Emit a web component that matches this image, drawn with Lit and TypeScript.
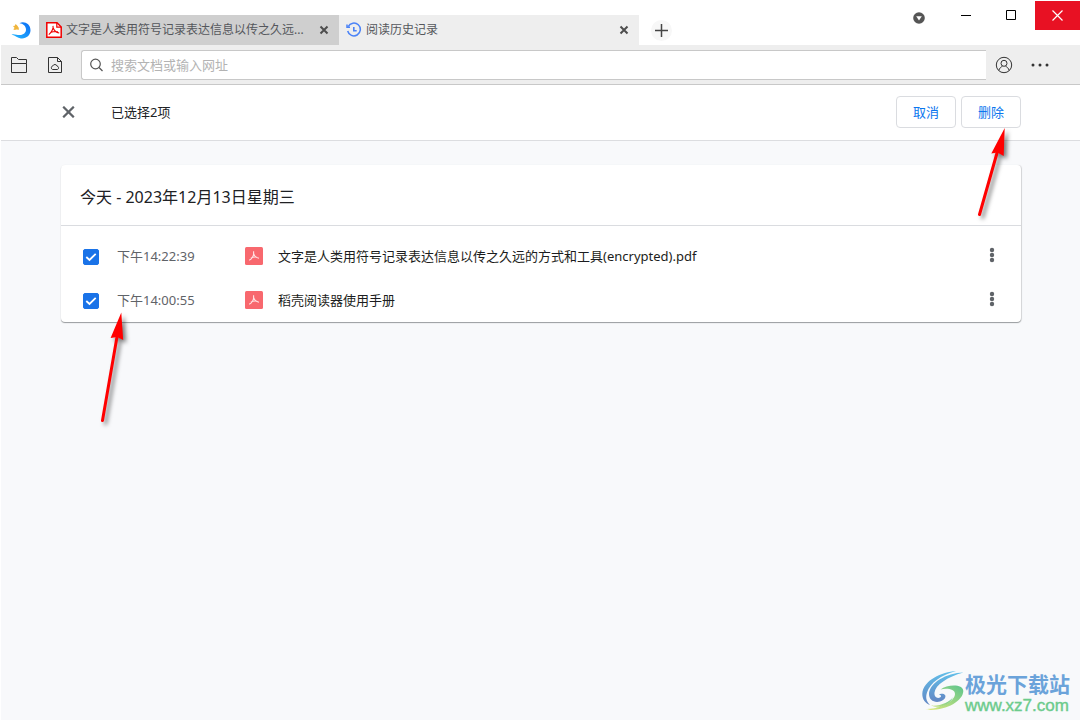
import { LitElement, html, css, svg } from "lit";
import { customElement, property } from "lit/decorators.js";

const font = css`"Noto Sans", "Noto Sans CJK SC", sans-serif`;

const cross = html`<svg width="10" height="10" viewBox="0 0 10 10">
  <path d="M1.5 1.5 8.5 8.5M8.5 1.5 1.5 8.5" fill="none" stroke="currentColor" stroke-width="2" />
</svg>`;

const dot = (cx: number, cy: number, r: number) => svg`<circle cx=${cx} cy=${cy} r=${r} />`;

@customElement("history-row")
export class HistoryRow extends LitElement {
  @property() time = "";
  @property() name = "";

  static styles = css`
    :host {
      display: flex;
      align-items: center;
      height: 44px;
      padding: 0 20px;
      font: 13px/20px ${font};
    }
    .pick {
      display: flex;
      align-items: center;
      width: 164px;
      gap: 18px;
      color: #5f6368;
    }
    .box {
      appearance: none;
      width: 16px;
      height: 16px;
      margin: 2px 0 0 2px;
      border-radius: 2px;
      border: 1px solid #5f6368;
    }
    .box:checked {
      border-color: #1a73e8;
      background: #1a73e8
        url("data:image/svg+xml,%3Csvg xmlns='http://www.w3.org/2000/svg' viewBox='0 0 14 14'%3E%3Cpath d='M2.3 7 5.5 10 11.7 3.8' fill='none' stroke='white' stroke-width='1.8'/%3E%3C/svg%3E")
        center / 14px 14px no-repeat;
    }
    .icon {
      display: block;
      width: 18px;
      height: 18px;
      margin-right: 15px;
      color: #ffe3e4;
    }
    .name {
      flex: 1;
      color: #1c1d20;
      text-decoration: none;
      white-space: nowrap;
      overflow: hidden;
      text-overflow: ellipsis;
    }
    .more {
      display: flex;
      justify-content: center;
      width: 18px;
      height: 24px;
      padding: 3px 0;
      border: 0;
      background: none;
      color: #5f6368;
    }
  `;

  render() {
    return html`
      <label class="pick"><input class="box" type="checkbox" checked /><span>${this.time}</span></label>
      <svg class="icon" viewBox="0 0 18 18">
        <rect width="18" height="18" rx="1.5" fill="#f8686e" />
        <path d="M8.6 4.2V7C8.4 9 6.5 12 4.2 13.2M8.6 6.5C9.3 9 11 10.8 14 11.2M5.8 11.3C8 10 10 9.8 12 10.3"
          fill="none" stroke="currentColor" stroke-width="1.1" />
      </svg>
      <a class="name" href="#">${this.name}</a>
      <button class="more" aria-label="更多">
        <svg width="6" height="16" viewBox="0 0 6 16" fill="currentColor">
          ${[3, 8, 13].map((y) => dot(3, y, 2.2))}
        </svg>
      </button>
    `;
  }
}

@customElement("app-root")
export class AppRoot extends LitElement {
  private entries = [
    { time: "下午14:22:39", name: "文字是人类用符号记录表达信息以传之久远的方式和工具(encrypted).pdf" },
    { time: "下午14:00:55", name: "稻壳阅读器使用手册" },
  ];

  static styles = css`
    :host {
      display: flex;
      flex-direction: column;
      position: relative;
      box-sizing: border-box;
      min-height: 100vh;
      overflow: hidden;
      border: 1px solid #fff;
      background: #f8f9fb;
      font: 13px/20px ${font};
    }
    * {
      box-sizing: border-box;
    }
    svg {
      display: block;
      flex: none;
    }
    button {
      display: flex;
      align-items: center;
      justify-content: center;
      padding: 0;
      border: 0;
      background: none;
      font: inherit;
      color: inherit;
    }
    .titlebar {
      display: flex;
      align-items: flex-end;
      height: 44px;
      background: #fff;
    }
    .logo {
      margin: 0 8px 4px 10px;
    }
    .tab {
      display: flex;
      align-items: center;
      width: 300px;
      height: 30px;
      padding: 0 9px 0 7px;
      background: #eee;
      color: #55575c;
      font-size: 12px;
    }
    .tab.back {
      background: #cfcfcf;
    }
    .tab .label {
      flex: 1;
      margin-left: 4px;
      overflow: hidden;
      white-space: nowrap;
    }
    .close {
      width: 12px;
      height: 16px;
      color: #4d4d4d;
    }
    .add {
      width: 21px;
      height: 21px;
      margin: 0 0 4px 12px;
      border-radius: 50%;
      background: #f7f7f7;
      color: #444;
    }
    .window {
      display: flex;
      align-self: flex-start;
      margin-left: auto;
    }
    .window button {
      width: 45px;
      height: 29px;
      padding: 0 3px 1px 0;
    }
    .window .quit {
      padding: 0 1px 1px 0;
      background: #e81123;
      color: #fff;
    }
    .window .drop {
      width: 50px;
      padding: 5px 3px 0 0;
    }
    .toolbar {
      display: flex;
      align-items: center;
      height: 40px;
      padding: 0 31px 0 9px;
      background: #eee;
      border-bottom: 1px solid #c8c8c8;
      color: #333;
    }
    .toolbar button {
      width: 18px;
      height: 24px;
    }
    .toolbar .cloud {
      margin: 0 17px 0 18px;
    }
    .search {
      display: flex;
      align-items: center;
      flex: 1;
      height: 30px;
      margin-right: 9px;
      padding-left: 8px;
      gap: 7px;
      border: 1px solid #c8c8c8;
      border-right: 0;
      border-radius: 3px 0 0 3px;
      background: #fff;
      color: #555;
    }
    .search input {
      flex: 1;
      min-width: 0;
      height: 24px;
      padding: 0;
      border: 0;
      outline: 0;
      background: none;
      font: inherit;
    }
    .search input::placeholder {
      color: #b3b3b3;
    }
    .toolbar .dots {
      margin-left: 18px;
    }
    .selection {
      display: flex;
      align-items: center;
      height: 56px;
      padding: 0 59px 2px 60px;
      background: #fff;
      border-bottom: 1px solid #dcdde0;
      color: #202124;
    }
    .clear {
      width: 15px;
      height: 20px;
      margin-right: 35px;
      color: #5f6368;
    }
    .actions {
      display: flex;
      gap: 5px;
      margin-left: auto;
    }
    .actions button {
      width: 60px;
      height: 32px;
      border: 1px solid #dadce0;
      border-radius: 4px;
      color: #0b76ee;
    }
    .card {
      margin: 24px 59px 0 60px;
      border-radius: 4px;
      background: #fff;
      box-shadow: 0 1px 1px rgba(60, 64, 67, 0.5), 1px 0 1px rgba(60, 64, 67, 0.15);
    }
    .card h2 {
      height: 61px;
      margin: 0;
      padding: 18px 19px;
      border-bottom: 1px solid #dadce0;
      color: #202124;
      font-size: 16px;
      line-height: 28px;
      font-weight: 400;
    }
    .rows {
      padding: 8px 0 0;
    }
    .arrow {
      position: absolute;
      filter: drop-shadow(3px 3px 2px rgba(0, 0, 0, 0.5));
      pointer-events: none;
    }
    .arrow.to-delete {
      left: 970px;
      top: 124px;
    }
    .arrow.to-row {
      left: 95px;
      top: 309px;
    }
    .mark {
      display: flex;
      align-items: flex-start;
      gap: 1px;
      position: absolute;
      right: 10px;
      bottom: 5px;
      color: #6ba3da;
      text-decoration: none;
    }
    .mark .words {
      display: flex;
      flex-direction: column;
    }
    .mark .title {
      font-size: 21px;
      line-height: 26px;
      font-weight: 700;
    }
    .mark .site {
      color: #6ccb8c;
      font: 17px/18px "Liberation Sans", sans-serif;
      -webkit-text-stroke: 0.4px #6ccb8c;
    }
  `;

  render() {
    return html`
      <header class="titlebar">
        <svg class="logo" width="20" height="20" viewBox="0 0 20 20">
          <defs>
            <linearGradient id="moon" x1="0" y1="1" x2="1" y2="0">
              <stop offset="0" stop-color="#25b9ff" /><stop offset="1" stop-color="#0b6cf5" />
            </linearGradient>
          </defs>
          <path d="M8.500 2.200C13-.3 19.500 2.800 19.500 9.300c0 5.200-4.700 8.800-9.700 8.100C6.500 17 4.500 14.500.5 13.500c3-.7 5 .6 8.300.6 3.800 0 6.200-2.400 6.200-5.500C15 5 12 2.500 8.500 2.200z" fill="url(#moon)" />
          <path d="M2 5 3.800 4.800 4.600 3 6.200 4.600 7.600 6.400 8 8.800 5.500 8.400 3.800 9 2.200 8.200 3.600 7z" fill="#f0b53c" />
        </svg>
        <div class="tab back">
          <svg width="16" height="16" viewBox="0 0 16 16">
            <path d="M.8.8H11L15.200 5v10.200H.8z" fill="#fff" stroke="#f00000" stroke-width="1.500" />
            <path d="M10.800.8V5.200H15.200" fill="none" stroke="#f00000" stroke-width="1.200" />
            <path d="M7 3.800C7.600 6 6 10 2.800 12.600M7 5.500C8 8.500 10 10.500 13.200 11M4.500 10.500C7 9.500 9.500 9.200 12 9.800" fill="none" stroke="#f00000" stroke-width="1.100" />
          </svg>
          <span class="label">文字是人类用符号记录表达信息以传之久远...</span>
          <button class="close" aria-label="关闭标签">${cross}</button>
        </div>
        <div class="tab">
          <svg width="16" height="16" viewBox="0 0 16 16" fill="none" stroke="#4b83f7">
            <path d="M2.200 4.600A6.400 6.400 0 1 1 1.700 9" stroke-width="1.500" />
            <path d="M1 2.500V5.300H4" stroke-width="1.500" />
            <path d="M7.800 5V8.700H10.700" stroke-width="1.600" />
          </svg>
          <span class="label">阅读历史记录</span>
          <button class="close" aria-label="关闭标签">${cross}</button>
        </div>
        <button class="add" aria-label="新标签">
          <svg width="13" height="13" viewBox="0 0 13 13"><path d="M6.500 0V13M0 6.500H13" stroke="currentColor" stroke-width="1.500" /></svg>
        </button>
        <div class="window">
          <button class="drop" aria-label="菜单">
            <svg width="12" height="12" viewBox="0 0 12 12">
              <circle cx="6" cy="6" r="5.800" fill="#555" /><path d="M3.200 4.200H8.800L6 8.400z" fill="#fff" />
            </svg>
          </button>
          <button aria-label="最小化"><svg width="10" height="10"><path d="M0 5.500H10" stroke="#000" /></svg></button>
          <button aria-label="最大化"><svg width="10" height="10"><path d="M.5.5H9.500V9.500H.5z" fill="none" stroke="#000" /></svg></button>
          <button class="quit" aria-label="关闭">
            <svg width="11" height="11" viewBox="0 0 11 11"><path d="M.5.5 10.500 10.500M10.500.5.5 10.500" stroke="currentColor" stroke-width="1.200" /></svg>
          </button>
        </div>
      </header>

      <nav class="toolbar">
        <button aria-label="打开文件">
          <svg width="18" height="16" viewBox="0 0 18 16" fill="none" stroke="currentColor">
            <path d="M1.500 6.500H16.500V15.500H1.500V.5H6.500L8.500 2.500H16.500V6.500" />
          </svg>
        </button>
        <button class="cloud" aria-label="云文档">
          <svg width="16" height="16" viewBox="0 0 16 16" fill="none" stroke="currentColor">
            <path d="M1.500.5H10.500L14.500 4.500V15.500H1.500zM10.500.5V4.500H14.500" />
            <path d="M5.500 12.500a1.900 1.900 0 0 1 .3-3.600 2.300 2.300 0 0 1 4.300.2 1.800 1.800 0 0 1 .4 3.400z" />
          </svg>
        </button>
        <div class="search">
          <svg width="14" height="14" viewBox="0 0 14 14" fill="none" stroke="currentColor" stroke-width="1.200">
            <circle cx="5.500" cy="6" r="4.800" /><path d="M9 9.500 12.500 13" />
          </svg>
          <input type="text" aria-label="搜索" placeholder="搜索文档或输入网址" />
        </div>
        <button aria-label="账户">
          <svg width="18" height="18" viewBox="0 0 18 18" fill="none" stroke="currentColor">
            <circle cx="9" cy="9" r="7.700" /><circle cx="9" cy="7.300" r="3" />
            <path d="M3.800 14.500C4.500 12 6 11 7.500 10.200M14.200 14.500C13.500 12 12 11 10.500 10.200" />
          </svg>
        </button>
        <button class="dots" aria-label="更多">
          <svg width="18" height="4" viewBox="0 0 18 4" fill="currentColor">
            ${[2, 9, 16].map((x) => dot(x, 2, 1.5))}
          </svg>
        </button>
      </nav>

      <section class="selection">
        <button class="clear" aria-label="清除选择">
          <svg width="13" height="12" viewBox="0 0 13 12"><path d="M1.200.7 11.800 11.300M11.800.7 1.200 11.300" stroke="currentColor" stroke-width="2.200" /></svg>
        </button>
        <span>已选择2项</span>
        <div class="actions">
          <button>取消</button>
          <button>删除</button>
        </div>
      </section>

      <main class="card">
        <h2>今天 - 2023年12月13日星期三</h2>
        <div class="rows">
          ${this.entries.map((e) => html`<history-row .time=${e.time} .name=${e.name}></history-row>`)}
        </div>
      </main>

      <svg class="arrow to-delete" width="44" height="98" viewBox="0 0 44 98">
        <path d="M8.500 89.500 26 28" stroke="#f00" stroke-width="3" stroke-linecap="round" />
        <path d="M33.700 3 20.300 28.500 26.500 27.500 32.700 31z" fill="#f00" />
      </svg>
      <svg class="arrow to-row" width="44" height="120" viewBox="0 0 44 120">
        <path d="M6.500 110.500 20.800 28" stroke="#f00" stroke-width="3" stroke-linecap="round" />
        <path d="M25.300 2.500 14.600 28 21 27 27.200 30z" fill="#f00" />
      </svg>

      <a class="mark" href="#">
        <svg width="42" height="40" viewBox="0 0 42 40">
          <defs>
            <linearGradient id="upper" x1="0" y1="0" x2="0" y2="1">
              <stop offset="0" stop-color="#62bfe9" /><stop offset="1" stop-color="#6387c4" />
            </linearGradient>
            <linearGradient id="lower" x1="1" y1="0" x2="0" y2="1">
              <stop offset="0" stop-color="#5cc48d" /><stop offset="1" stop-color="#e3ea78" />
            </linearGradient>
          </defs>
          <path d="M34 0C20 1 1 9 .3 23 .2 28 3 32 8 34 4 30 3.500 26 5 21.500 8 12 19 4 34 0z" fill="url(#upper)" />
          <path d="M41.500 1.500C24 2 7.500 12 7 23 7 29 12 32 18 30.500 22 29.500 24.500 26 23 24 21.500 22 18 22.500 17 24 19 23.500 20 25 18 26.500 15 28 12 25.500 12.500 21.500 13.500 14 25 6 41.500 1.500z" fill="url(#upper)" />
          <path d="M18.500 18.500C25 13.500 41 12.500 41.300 20 41 31 21 41 3 38.500 18 38.500 33 30 33 23 33 18 25 17 18.500 18.500z" fill="url(#lower)" />
          <path d="M9 34.500C18 35.500 28 31 31 26 28 34 16 38.500 5 38 12 37.500 16 36.500 19 35.500 15 36 12 35.800 9 34.500z" fill="url(#lower)" />
        </svg>
        <span class="words"><span class="title">极光下载站</span><span class="site">www.xz7.com</span></span>
      </a>
    `;
  }
}
